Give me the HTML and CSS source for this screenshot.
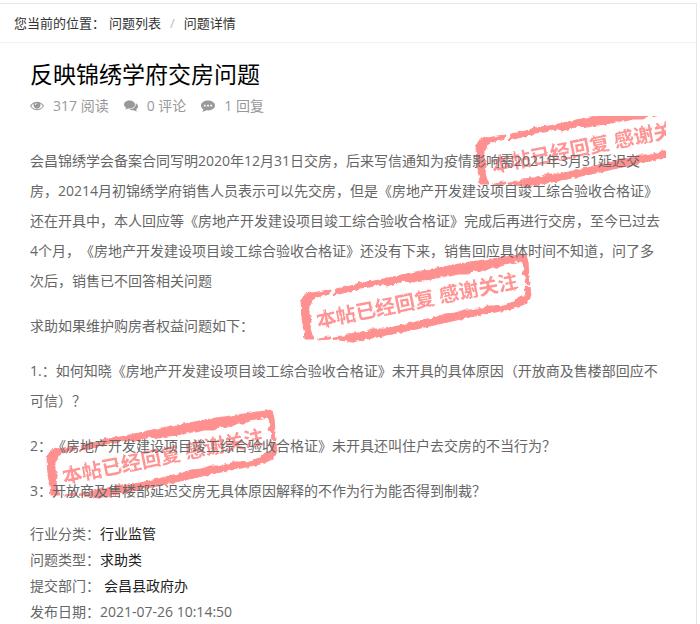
FILE: index.html
```
<!DOCTYPE html>
<html lang="zh-CN">
<head>
<meta charset="utf-8">
<title>反映锦绣学府交房问题</title>
<link rel="stylesheet" href="styles.css">
</head>
<body>
<svg class="defs" aria-hidden="true">
  <defs>
    <filter id="rough" filterUnits="userSpaceOnUse" x="-4" y="-4" width="240" height="98">
      <feTurbulence type="fractalNoise" baseFrequency="0.22" numOctaves="2" seed="4" result="n"/>
      <feDisplacementMap in="SourceGraphic" in2="n" scale="4" xChannelSelector="R" yChannelSelector="G"/>
    </filter>
    <filter id="worn" filterUnits="userSpaceOnUse" x="-4" y="-4" width="240" height="98">
      <feTurbulence type="fractalNoise" baseFrequency="0.3" numOctaves="2" seed="9" result="n"/>
      <feDisplacementMap in="SourceGraphic" in2="n" scale="2" xChannelSelector="R" yChannelSelector="G"/>
    </filter>
    <symbol id="stamp" viewBox="0 0 232 90">
      <g fill="#ff9090" stroke="#ff9090" stroke-width="1" filter="url(#rough)">
        <path d="M1 48L5 41 30 37 29 41 17 44 12 47 9 54 9 60 11 68 10 75 12 82 15 86 5 86 4 76 2 66Z"/>
        <path d="M33 42L36 36 56 32 58 30 74 28 116 19 170 9 226 1 228 10 229 23 230 31 225 30 226 24 223 20 225 15 221 8 204 11 198 14 192 14 184 18 174 18 168 21 158 21 150 23 140 23 133 26 122 27 112 29 104 28 96 30 88 33 79 31 70 34 60 35 51 38 43 40Z"/>
        <path d="M225 33L230 34 231 43 227 50 215 55 170 64 116 76 82 83 52 89 33 86 33 84 44 83 55 80 63 80 72 76 85 76 98 73 116 69 121 67 134 65 145 61 156 60 164 57 177 57 188 53 200 53 214 49 219 44 225 44 226 38Z"/>
        <path d="M18 85L30 84 30 86 18 87Z"/>
      </g>
      <g fill="#ff9494" filter="url(#worn)">
        <text class="stamp-text" x="18" y="75" transform="rotate(-11.4 18 75)">本帖已经回复 感谢关注</text>
      </g>
    </symbol>
  </defs>
</svg>
<main class="panel">
  <nav class="crumbs" aria-label="面包屑">
    <span>您当前的位置：</span>
    <a href="#">问题列表</a>
    <span class="sep">/</span>
    <a href="#">问题详情</a>
  </nav>
  <article class="post">
    <h1>反映锦绣学府交房问题</h1>
    <div class="stats">
      <span class="stat"><svg viewBox="0 0 14 12"><path fill-rule="evenodd" d="M0 6C3.500 .4 10.500 .4 14 6 10.500 11.600 3.500 11.600 0 6ZM1.200 6C4 10.400 10 10.400 12.800 6 12 4.700 11 3.800 9.800 3.200A3.400 3.400 0 1 1 4.200 3.200C3 3.800 2 4.700 1.200 6ZM5 5H5.800Q5.900 3.800 7.100 3.700V3Q5.100 3 5 5Z"/></svg>317 阅读</span>
      <span class="stat"><svg viewBox="0 0 14 12"><path d="M5.500 .5C2.400 .5 0 2.300 0 4.500 0 5.800.8 7 2.100 7.700 1.900 8.400 1.500 8.900 1 9.400 2.300 9.300 3.400 8.800 4.200 8.400 8 9 11 7 11 4.500 11 2.300 8.600 .5 5.500 .5Z"/><path d="M11.700 3.300C13.100 4 14 5.100 14 6.500 14 7.700 13.200 8.800 12 9.500 12.200 10.200 12.600 10.800 13.100 11.400 11.800 11.300 10.700 10.800 9.800 10.300 8 10.500 6.500 10.100 5.300 9.300 9.300 9.200 12.400 6.600 11.700 3.300Z"/></svg>0 评论</span>
      <span class="stat"><svg viewBox="0 0 14 12"><path fill-rule="evenodd" d="M7 .5C3.100 .5 0 2.700 0 5.500 0 7.100 1 8.500 2.500 9.400 2.300 10.300 1.800 11.100 1.100 11.800 2.900 11.600 4.300 11 5.400 10.300 10 11.100 14 8.700 14 5.500 14 2.700 10.900 .5 7 .5ZM2.900 4.700H4.700V6.400H2.900ZM6.100 4.700H7.900V6.400H6.100ZM9.300 4.700H11.100V6.400H9.300Z"/></svg>1 回复</span>
    </div>
    <section class="body">
      <svg class="stamp stamp-a" aria-hidden="true"><use href="#stamp"/></svg>
      <svg class="stamp stamp-b" aria-hidden="true"><use href="#stamp"/></svg>
      <svg class="stamp stamp-c" aria-hidden="true"><use href="#stamp"/></svg>
      <p>会昌锦绣学会备案合同写明2020年12月31日交房，后来写信通知为疫情影响需2021年3月31延迟交房，20214月初锦绣学府销售人员表示可以先交房，但是《房地产开发建设项目竣工综合验收合格证》还在开具中，本人回应等《房地产开发建设项目竣工综合验收合格证》完成后再进行交房，至今已过去4个月，《房地产开发建设项目竣工综合验收合格证》还没有下来，销售回应具体时间不知道，问了多次后，销售已不回答相关问题</p>
      <p>求助如果维护购房者权益问题如下：</p>
      <p>1.：如何知晓《房地产开发建设项目竣工综合验收合格证》未开具的具体原因（开放商及售楼部回应不可信）？</p>
      <p>2：《房地产开发建设项目竣工综合验收合格证》未开具还叫住户去交房的不当行为？</p>
      <p>3：开放商及售楼部延迟交房无具体原因解释的不作为行为能否得到制裁？</p>
    </section>
    <dl class="meta">
      <div><dt>行业分类：</dt><dd class="dark">行业监管</dd></div>
      <div><dt>问题类型：</dt><dd class="dark">求助类</dd></div>
      <div><dt>提交部门：</dt><dd class="dark dept">会昌县政府办</dd></div>
      <div><dt>发布日期：</dt><dd>2021-07-26 10:14:50</dd></div>
    </dl>
  </article>
</main>
</body>
</html>
```
FILE: styles.css
```
body {
  margin: 0;
  background: #fff;
  color: #666;
  font: 14px/24px "Open Sans", "Noto Sans CJK SC", sans-serif;
  text-spacing-trim: space-all;
}
.defs { position: absolute; width: 0; height: 0; }
.panel {
  margin: 3px 3px 0 0;
  border-top: 1px solid #e4e9ee;
  border-right: 1px solid #dfe9f5;
}
.crumbs {
  display: flex;
  align-items: center;
  height: 38px;
  padding-left: 14px;
  border-bottom: 1px solid #f0f2f4;
  color: #333;
  font-size: 13px;
}
.crumbs a { color: #333; text-decoration: none; }
.crumbs a:first-of-type { margin-left: 4px; }
.sep { margin: 0 9px; color: #bbb; }
.post { padding: 13px 30px 0; }
h1 {
  margin: 0;
  color: #000;
  font-size: 23px;
  line-height: 36px;
  font-weight: 400;
}
.stats { display: flex; gap: 15px; padding-top: 4px; color: #999; line-height: 20px; }
.stat { display: flex; align-items: center; }
.stat svg { width: 14px; height: 12px; margin-right: 9px; fill: #999; }
.body {
  position: relative;
  overflow: hidden;
  padding-top: 30px;
}
.body p { position: relative; margin: 0 0 15px; line-height: 30px; }
.stamp { position: absolute; width: 232px; height: 90px; }
.stamp-a { left: 445px; top: -18px; }
.stamp-b { left: 270px; top: 137px; }
.stamp-c { left: 16px; top: 293px; }
.stamp-text {
  font-family: "Liberation Serif", "Noto Sans CJK SC", serif;
  font-size: 20px;
  font-weight: 700;
}
.meta { margin: 0; line-height: 26px; }
.meta div { display: flex; }
.meta dd { margin: 0; }
.meta .dark { color: #222; }
.meta .dept { padding-left: 4px; }
```
